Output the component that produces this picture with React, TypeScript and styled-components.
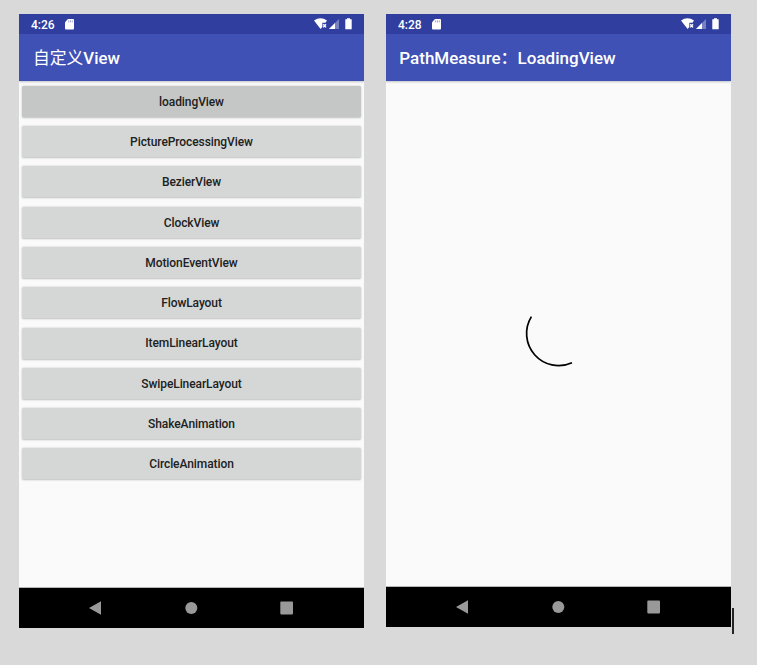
import React from 'react';
import styled, { createGlobalStyle } from 'styled-components';

const GlobalStyle = createGlobalStyle`
  body {
    margin: 0;
    background: #d9d9d9;
    font-family: Roboto, 'Noto Sans CJK SC', sans-serif;
  }
`;

const Page = styled.main`
  box-sizing: border-box;
  display: flex;
  align-items: flex-start;
  width: 757px;
  height: 665px;
  padding: 14px 0 0 19px;
  overflow: hidden;
`;

const Phone = styled.section<{ $height: number }>`
  display: flex;
  flex-direction: column;
  flex: none;
  width: 345px;
  height: ${(p) => p.$height}px;
  margin-right: 22px;
  background: #fafafa;

  &:last-of-type {
    margin-right: 1px;
  }
`;

const StatusBar = styled.header`
  box-sizing: border-box;
  display: flex;
  align-items: center;
  flex: none;
  height: 20px;
  padding-left: 12px;
  background: #303f9f;
  color: #fff;
`;

const Time = styled.span`
  width: 34px;
  font-size: 12px;
  line-height: 20px;
  font-weight: 500;
  padding-top: 1px;
`;

const StatusIcons = styled.svg`
  margin-left: auto;
`;

const AppBar = styled.div<{ $inset: number }>`
  box-sizing: border-box;
  flex: none;
  height: 47px;
  padding-left: ${(p) => p.$inset}px;
  background: #3f51b5;
  box-shadow: 0 1px 2px rgba(0, 0, 0, 0.22);
  clip-path: inset(0 0 -5px 0);
`;

const Title = styled.h1<{ $size: number }>`
  margin: 0;
  color: #fff;
  font-size: ${(p) => p.$size}px;
  font-weight: 500;
  line-height: 48px;
  white-space: nowrap;
`;

const Light = styled.span`
  font-weight: 400;
`;

const Content = styled.div`
  display: flex;
  flex: 1;
  flex-direction: column;
  min-height: 0;
  border-bottom: 1px solid #b5b5b5;
`;

const ButtonList = styled.div`
  display: grid;
  grid-auto-rows: 31px;
  row-gap: 9.3px;
  padding: 4.8px 3px 0;
`;

const ListButton = styled.button<{ $pressed?: boolean }>`
  border: 0;
  border-radius: 1.5px;
  padding: 0.7px 0 0;
  background: ${(p) => (p.$pressed ? '#c5c7c6' : '#d5d7d6')};
  box-shadow: 0 0.5px 2px rgba(0, 0, 0, 0.24);
  color: #202121;
  font-family: inherit;
  font-size: 12px;
  font-weight: 500;
  letter-spacing: -0.08px;
  line-height: 30px;
`;

const Spinner = styled.svg`
  margin: 231px 0 0 135px;
`;

const NavBar = styled.nav`
  display: flex;
  flex: none;
  align-items: center;
  gap: 82px;
  height: 40px;
  padding-left: 69px;
  background: #000;
`;

const Caret = styled.div`
  width: 2px;
  height: 26px;
  margin-top: 594px;
  background: #252525;
`;

const SdCard = () => (
  <svg width="9" height="11" viewBox="0 0 9 11">
    <path d="M3 0H8Q9 0 9 1V9.5Q9 10.5 8 10.5H1Q0 10.5 0 9.5V3.2Z" fill="#fff" />
    <path
      d="M3.7 1.4V3.4M5.5 1.4V3.4M7.3 1.4V3.4"
      stroke="#303f9f"
      strokeOpacity=".6"
      strokeWidth=".8"
    />
  </svg>
);

const Indicators = () => (
  <StatusIcons width="50" height="12" viewBox="0 0 50 12">
    <path d="M0 2.6Q6.5-2 13 2.6L11.5 4.8H8.3V9L6.6 11Z" fill="#fff" />
    <path d="M9.2 6.2L12 9.4M12 6.2L9.2 9.4" stroke="#fff" strokeWidth="1.4" />
    <path d="M15 11L25 1V11Z" fill="#fff" fillOpacity=".35" />
    <path d="M15 11L21 5V11Z" fill="#fff" />
    <path d="M33 0.3H36V1.3H37.7V11.3H31.3V1.3H33Z" fill="#fff" />
  </StatusIcons>
);

const Navigation = () => (
  <NavBar>
    <svg width="14" height="14" viewBox="0 0 14 14">
      <path d="M1 7L13 .3V13.7Z" fill="#999" />
    </svg>
    <svg width="14" height="14" viewBox="0 0 14 14">
      <circle cx="7.3" cy="7" r="6" fill="#999" />
    </svg>
    <svg width="14" height="14" viewBox="0 0 14 14">
      <rect x=".3" y=".6" width="12.7" height="12.8" rx=".8" fill="#999" />
    </svg>
  </NavBar>
);

const Status = ({ time }: { time: string }) => (
  <StatusBar>
    <Time>{time}</Time>
    <SdCard />
    <Indicators />
  </StatusBar>
);

const views = [
  'loadingView',
  'PictureProcessingView',
  'BezierView',
  'ClockView',
  'MotionEventView',
  'FlowLayout',
  'ItemLinearLayout',
  'SwipeLinearLayout',
  'ShakeAnimation',
  'CircleAnimation',
];

export default function App() {
  return (
    <>
      <GlobalStyle />
      <Page>
        <Phone $height={614}>
          <Status time="4:26" />
          <AppBar $inset={14}>
            <Title $size={16.8}>
              <Light>自定义</Light>View
            </Title>
          </AppBar>
          <Content>
            <ButtonList>
              {views.map((name, index) => (
                <ListButton key={name} $pressed={index === 0}>
                  {name}
                </ListButton>
              ))}
            </ButtonList>
          </Content>
          <Navigation />
        </Phone>
        <Phone $height={613}>
          <Status time="4:28" />
          <AppBar $inset={13.3}>
            <Title $size={17}>PathMeasure：LoadingView</Title>
          </AppBar>
          <Content>
            <Spinner width="60" height="60" viewBox="0 0 60 60">
              <path
                d="M10.4 4.6A32.1 32.1 0 0 0 51 50.7"
                fill="none"
                stroke="#000"
                strokeWidth="1.7"
              />
            </Spinner>
          </Content>
          <Navigation />
        </Phone>
        <Caret />
      </Page>
    </>
  );
}
